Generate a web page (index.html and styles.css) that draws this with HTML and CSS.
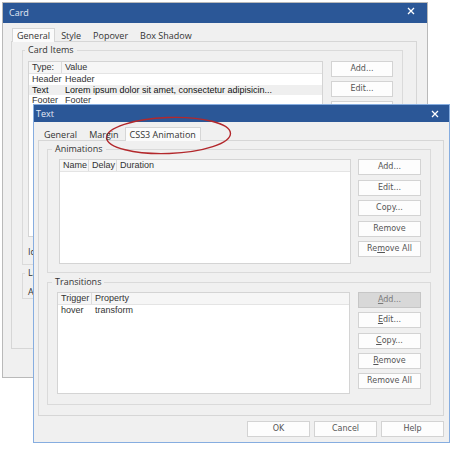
FILE: index.html
```html
<!DOCTYPE html>
<html>
<head>
<meta charset="utf-8">
<title>Card / Text dialogs</title>
<link rel="stylesheet" href="styles.css">
</head>
<body>
<div class="desk">
  <section class="win win-back">
    <header class="titlebar">
      <span class="title">Card</span>
      <svg class="close" viewBox="0 0 8 8"><path d="M1 1L7 7M7 1L1 7"/></svg>
    </header>
    <nav class="tabs">
      <span class="tab sel">General</span><span class="tab">Style</span><span class="tab">Popover</span><span class="tab">Box Shadow</span>
    </nav>
    <div class="panel">
      <fieldset class="grp grp-items">
        <legend>Card Items</legend>
        <div class="grp-row">
          <div class="list list-items">
            <div class="lh"><span class="c c-type">Type:</span><span class="c">Value</span></div>
            <div class="lr"><span class="c c-type">Header</span><span class="c">Header</span></div>
            <div class="lr cur"><span class="c c-type">Text</span><span class="c">Lorem ipsum dolor sit amet, consectetur adipisicin...</span></div>
            <div class="lr"><span class="c c-type">Footer</span><span class="c">Footer</span></div>
          </div>
          <div class="btns">
            <button class="btn">Add...</button>
            <button class="btn">Edit...</button>
            <button class="btn">Copy...</button>
            <button class="btn">Remove</button>
          </div>
        </div>
        <div class="field">Icon:</div>
      </fieldset>
      <fieldset class="grp grp-layout">
        <legend>Layout</legend>
        <div class="field">Alignment:</div>
      </fieldset>
    </div>
  </section>

  <section class="win win-front">
    <header class="titlebar">
      <span class="title">Text</span>
      <svg class="close" viewBox="0 0 8 8"><path d="M1 1L7 7M7 1L1 7"/></svg>
    </header>
    <nav class="tabs">
      <span class="tab">General</span><span class="tab">Margin</span><span class="tab sel">CSS3 Animation</span>
    </nav>
    <div class="panel">
      <fieldset class="grp grp-anim">
        <legend>Animations</legend>
        <div class="grp-row">
          <div class="list list-anim">
            <div class="lh"><span class="c c-name">Name</span><span class="c c-delay">Delay</span><span class="c">Duration</span></div>
          </div>
          <div class="btns">
            <button class="btn">Add...</button>
            <button class="btn">Edit...</button>
            <button class="btn">Copy...</button>
            <button class="btn">Remove</button>
            <button class="btn">Re<u>m</u>ove All</button>
          </div>
        </div>
      </fieldset>
      <fieldset class="grp grp-trans">
        <legend>Transitions</legend>
        <div class="grp-row">
          <div class="list list-trans">
            <div class="lh"><span class="c c-trig">Trigger</span><span class="c">Property</span></div>
            <div class="lr"><span class="c c-trig">hover</span><span class="c">transform</span></div>
          </div>
          <div class="btns">
            <button class="btn" disabled><u>A</u>dd...</button>
            <button class="btn"><u>E</u>dit...</button>
            <button class="btn"><u>C</u>opy...</button>
            <button class="btn"><u>R</u>emove</button>
            <button class="btn">Remove All</button>
          </div>
        </div>
      </fieldset>
    </div>
    <footer class="dlg-btns">
      <button class="btn">OK</button>
      <button class="btn">Cancel</button>
      <button class="btn">Help</button>
    </footer>
  </section>

  <svg class="ring" viewBox="0 0 458 452" width="458" height="452">
    <ellipse cx="168.5" cy="135.5" rx="62" ry="18" transform="rotate(-2 168.5 135.5)"/>
  </svg>
</div>
</body>
</html>
```

FILE: styles.css
```css
* { box-sizing: border-box; }

html, body {
  margin: 0;
  padding: 0;
  background: #ffffff;
}

body {
  font-family: "Open Sans", "Liberation Sans", sans-serif;
  font-size: 9px;
  color: #333333;
}

.desk {
  position: relative;
  width: 458px;
  height: 452px;
  overflow: hidden;
}

/* ---------- windows ---------- */
.win {
  position: absolute;
  display: flex;
  flex-direction: column;
  background: #f0f0f0;
}

.win-back {
  left: 2px;
  top: 2px;
  width: 426px;
  height: 376px;
  border: 1px solid #b9b9b9;
}

.win-front {
  left: 33px;
  top: 104px;
  width: 417px;
  height: 339px;
  border: 1px solid #86ade0;
}

.titlebar {
  flex: none;
  display: flex;
  justify-content: space-between;
  background: #2b5797;
  color: #e3eaf4;
}

.win-back .titlebar {
  height: 20px;
  padding: 0 12px 0 6px;
  align-items: flex-start;
}
.win-back .title { margin-top: 4px; }
.win-back .close { margin-top: 4px; }

.win-front .titlebar {
  height: 17px;
  padding: 0 10px 0 2px;
  align-items: center;
}

.title {
  font-size: 9px;
  line-height: 12px;
}

.close {
  width: 8px;
  height: 8px;
  fill: none;
  stroke: #ffffff;
  stroke-width: 1.3;
}

/* ---------- tabs ---------- */
.tabs {
  flex: none;
  display: flex;
  height: 14px;
  margin-top: 5px;
  margin-bottom: -1px;
  position: relative;
  z-index: 1;
}

.win-back .tabs { margin-left: 9px; }
.win-front .tabs { margin-left: 4px; }

.tab {
  padding: 0 5px;
  line-height: 13px;
  color: #333333;
  border: 1px solid transparent;
  border-bottom: none;
}

.tab.sel {
  padding: 0 4px;
  background: #fbfbfb;
  border-color: #d6d6d6;
  height: 14px;
}

/* ---------- tab panel ---------- */
.panel {
  flex: none;
  display: flex;
  flex-direction: column;
  border: 1px solid #d6d6d6;
  background: #f0f0f0;
}

.win-back .panel {
  height: 308px;
  margin: 0 10px 0 8px;
  padding-top: 2px;
}

.win-front .panel {
  height: 276px;
  margin: 0 5px 0 4px;
  padding-top: 2px;
}

/* ---------- group boxes ---------- */
.grp {
  margin: 0;
  min-width: 0;
  border: 1px solid #dadada;
  padding: 0;
}

.grp legend {
  padding: 0 3px;
  line-height: 12px;
  color: #333333;
}

.grp-row {
  display: flex;
}

.btns {
  flex: none;
  display: flex;
  flex-direction: column;
}

.field {
  line-height: 12px;
  margin-top: 9px;
}

/* back groups */
.grp-items {
  margin: 0 13px 0 10px;
  padding: 5px 9px 6px 5px;
}
.grp-items legend { margin-left: -3px; }
.grp-items .btns {
  width: 62px;
  margin-left: 8px;
  gap: 4px;
}
.grp-layout {
  margin: 2px 13px 0 10px;
  padding: 0 9px 0 5px;
}
.grp-layout legend { margin-left: -3px; }
.grp-layout .field { margin-top: 7px; line-height: 12px; }

/* front groups */
.grp-anim {
  margin: 0 12px 0 8px;
  padding: 4px 9px 8px 11px;
}
.grp-anim legend { margin-left: -7px; }
.grp-anim .btns {
  width: 63px;
  margin-left: 7px;
  gap: 4.5px;
}

.grp-trans {
  margin: 3px 12px 0 8px;
  padding: 4px 9px 10px 9px;
}
.grp-trans legend { margin-left: -5px; }
.grp-trans .btns {
  width: 63px;
  margin-left: 8px;
  gap: 4.25px;
}

/* ---------- list views ---------- */
.list {
  flex: 1;
  min-width: 0;
  background: #ffffff;
  border: 1px solid #d4d4d4;
  overflow: hidden;
  font-family: "Liberation Sans", Arial, sans-serif;
  font-size: 9px;
}

.list-items { height: 176px; }
.list-anim { height: 105px; }
.list-trans { height: 102px; }

.lh {
  display: flex;
  height: 12px;
  line-height: 11px;
  background: #f6f6f6;
  border-bottom: 1px solid #e4e4e4;
  color: #333333;
}

.lh .c {
  border-right: 1px solid #dcdcdc;
}
.lh .c:last-child { border-right: none; }

.lr {
  display: flex;
  height: 10.5px;
  line-height: 10.5px;
  color: #333333;
  white-space: nowrap;
}

.lr.cur {
  background: #efefef;
  color: #111111;
}

.c {
  padding-left: 3px;
  white-space: nowrap;
}

.c-type { flex: none; width: 33px; }
.c-name { flex: none; width: 29px; }
.c-delay { flex: none; width: 28px; }
.c-trig { flex: none; width: 34px; }

.list-trans .lr { height: 11px; line-height: 11px; }

/* ---------- buttons ---------- */
.btn {
  display: block;
  height: 16px;
  margin: 0;
  padding: 0;
  font-family: "DejaVu Sans", Verdana, sans-serif;
  font-size: 8px;
  line-height: 14px;
  color: #555555;
  background: #fdfdfd;
  border: 1px solid #d3d3d3;
  border-radius: 0;
  text-align: center;
}

.btn u {
  text-decoration: underline;
  text-underline-offset: 1px;
}

.btn:disabled {
  background: #d8d8d8;
  border-color: #c6c6c6;
  color: #7a7a7a;
}

.dlg-btns {
  flex: none;
  display: flex;
  justify-content: flex-end;
  gap: 4px;
  margin-top: 5px;
  padding-right: 5px;
}

.dlg-btns .btn {
  width: 63px;
}

/* ---------- annotation ---------- */
.ring {
  position: absolute;
  left: 0;
  top: 0;
  pointer-events: none;
}

.ring ellipse {
  fill: none;
  stroke: #b3282c;
  stroke-width: 1.4;
}
```
